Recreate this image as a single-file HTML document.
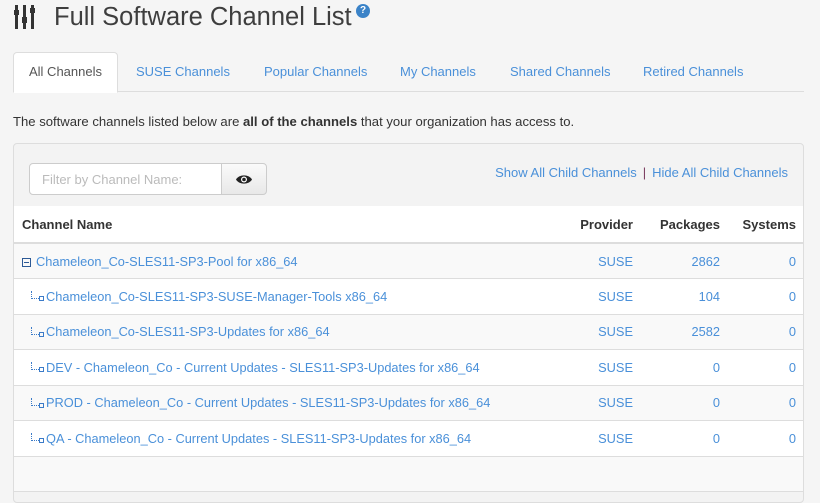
<!DOCTYPE html>
<html><head><style>
*{box-sizing:border-box;margin:0;padding:0}
body{width:820px;height:462px;overflow:hidden;background:#f5f5f5;font-family:"Liberation Sans",sans-serif;font-size:13px;color:#333;position:relative}
a{color:#4a90d9;text-decoration:none}
.title{position:absolute;left:54px;top:3px;font-size:25.5px;color:#3e3e3e;font-weight:normal}
.help{position:absolute;left:356px;top:4px;width:14px;height:14px;border-radius:50%;background:#3b83c8;color:#fff;font-size:10px;font-weight:bold;text-align:center;line-height:14px}
.tabs{position:absolute;left:13px;top:52px;width:791px;height:40px;border-bottom:1px solid #ddd}
.tab{position:absolute;top:0;height:40px;line-height:40px;color:#4a90d9;font-size:13px}
.tab.active{background:#fff;border:1px solid #ddd;border-bottom:1px solid #fff;border-radius:4px 4px 0 0;color:#555;padding:0 15px;left:0;height:41px;line-height:38px}
.desc{position:absolute;left:13px;top:114px;font-size:13.1px;color:#333}
.panel{position:absolute;left:13px;top:143px;width:791px;height:360px;border:1px solid #ddd;border-radius:4px;background:#f3f3f3;overflow:hidden}
.filter{position:absolute;left:15px;top:19px;width:193px;height:32px;border:1px solid #ccc;border-radius:4px 0 0 4px;background:#fff;color:#bbb;padding:8px 12px;font-size:13px}
.eye{position:absolute;left:207px;top:19px;width:46px;height:32px;border:1px solid #ccc;border-radius:0 4px 4px 0;background:linear-gradient(#fafafa,#e8e8e8)}
.links{position:absolute;right:15px;top:21px;font-size:13px}
.links span{color:#7a3b5e;margin:0 6px}
table{position:absolute;left:0;top:62px;width:790px;border-collapse:collapse;background:#fff}
th{height:37px;text-align:left;font-weight:bold;font-size:13px;color:#333;border-bottom:2px solid #ddd;padding:0 8px}
td{height:35.5px;border-bottom:1px solid #ddd;padding:0 8px;font-size:12.8px;color:#4a90d9}
tr:nth-child(even) td{background:#f9f9f9}
.r{text-align:right}
.c{padding-left:32px;position:relative}
.c:before{content:"";position:absolute;left:17px;top:12px;width:7px;height:7px;border-left:1px dotted #3b7bc8;border-bottom:1px dotted #3b7bc8}
.c:after{content:"";position:absolute;left:25px;top:17px;width:3px;height:3px;border:1px solid #3b7bc8}
.minus{display:inline-block;width:9px;height:9px;border:1px solid #2d5a96;position:relative;margin-right:5px;vertical-align:-1px}
.minus:after{content:"";position:absolute;left:1px;top:3px;width:5px;height:1px;background:#2d5a96}
</style></head><body>
<svg style="position:absolute;left:14px;top:5px" width="22" height="24" viewBox="0 0 22 24">
<rect x="1" y="0" width="3" height="24" fill="#333"/><rect x="0" y="5" width="5" height="5" fill="#333"/>
<rect x="9" y="0" width="3" height="24" fill="#333"/><rect x="8" y="12" width="5" height="6" fill="#333"/>
<rect x="17" y="0" width="3" height="24" fill="#333"/><rect x="16" y="3" width="5" height="5" fill="#333"/>
</svg>
<div class="title">Full Software Channel List</div>
<div class="help">?</div>
<div class="tabs">
<div class="tab active">All Channels</div>
<div class="tab" style="left:123px">SUSE Channels</div>
<div class="tab" style="left:251px">Popular Channels</div>
<div class="tab" style="left:387px">My Channels</div>
<div class="tab" style="left:497px">Shared Channels</div>
<div class="tab" style="left:630px">Retired Channels</div>
</div>
<div class="desc">The software channels listed below are <b>all of the channels</b> that your organization has access to.</div>
<div class="panel">
<div class="filter">Filter by Channel Name:</div>
<div class="eye"><svg style="position:absolute;left:14px;top:10px" width="16" height="11" viewBox="0 0 16 11"><path d="M0 5.5C3 0 13 0 16 5.5C13 11 3 11 0 5.5Z" fill="#222"/><circle cx="8" cy="5.5" r="3" fill="#fff"/><circle cx="8" cy="5.5" r="1.8" fill="#222"/></svg></div>
<div class="links"><a>Show All Child Channels</a><span>|</span><a>Hide All Child Channels</a></div>
<table>
<tr><th>Channel Name</th><th class="r" style="width:80px">Provider</th><th class="r" style="width:87px">Packages</th><th class="r" style="width:76px">Systems</th></tr>
<tr><td><span class="minus"></span>Chameleon_Co-SLES11-SP3-Pool for x86_64</td><td class="r">SUSE</td><td class="r">2862</td><td class="r">0</td></tr>
<tr><td class="c">Chameleon_Co-SLES11-SP3-SUSE-Manager-Tools x86_64</td><td class="r">SUSE</td><td class="r">104</td><td class="r">0</td></tr>
<tr><td class="c">Chameleon_Co-SLES11-SP3-Updates for x86_64</td><td class="r">SUSE</td><td class="r">2582</td><td class="r">0</td></tr>
<tr><td class="c">DEV - Chameleon_Co - Current Updates - SLES11-SP3-Updates for x86_64</td><td class="r">SUSE</td><td class="r">0</td><td class="r">0</td></tr>
<tr><td class="c">PROD - Chameleon_Co - Current Updates - SLES11-SP3-Updates for x86_64</td><td class="r">SUSE</td><td class="r">0</td><td class="r">0</td></tr>
<tr><td class="c">QA - Chameleon_Co - Current Updates - SLES11-SP3-Updates for x86_64</td><td class="r">SUSE</td><td class="r">0</td><td class="r">0</td></tr>
<tr><td>&nbsp;</td><td></td><td></td><td></td></tr>
</table>
</div>
</body></html>
